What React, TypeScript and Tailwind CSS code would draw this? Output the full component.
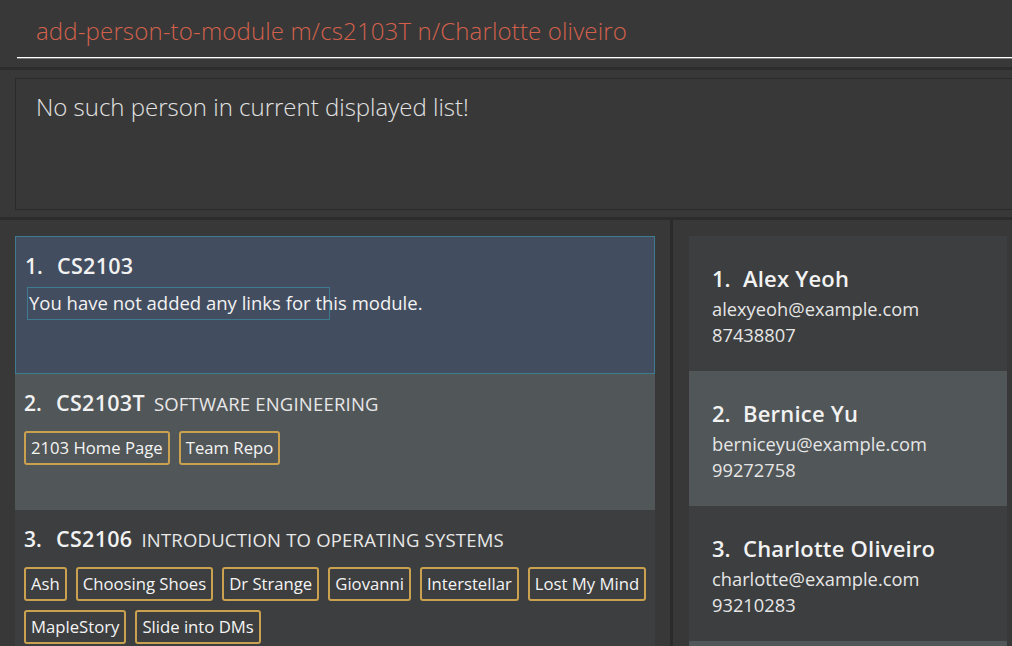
import React from "react";

const F = { fontFamily: '"Open Sans", "Noto Sans", sans-serif' };

function Tag({ label }: { label: string }) {
  return (
    <div className="h-[34px] flex items-center px-[5px] border-2 border-[#c9a14f] rounded-[3px] text-[16.7px] text-[#f4f4f4] leading-none">
      {label}
    </div>
  );
}

function ModuleCard({
  idx,
  code,
  title,
  tags,
  bg,
  selected,
  h,
}: {
  idx: number;
  code: string;
  title?: string;
  tags?: string[];
  bg: string;
  selected?: boolean;
  h?: string;
}) {
  return (
    <div
      className={`${bg} ${h ?? ""} ${selected ? "border border-[#3e7b91]" : ""} pl-[9px] pr-[3px] pt-[13px] shrink-0`}
    >
      <div className="flex items-baseline h-[28px] text-[#f2f2f2]">
        <span className="text-[21px] font-semibold w-[32px]">{idx}.</span>
        <span className="text-[21.5px] font-semibold tracking-[0.3px]">{code}</span>
        {title && (
          <span className="text-[18.5px] ml-[9px] tracking-[0.2px] text-[#e8e8e8]">{title}</span>
        )}
      </div>
      {tags ? (
        <div className="flex flex-wrap gap-[9px] mt-[16px]">
          {tags.map((t) => (
            <Tag key={t} label={t} />
          ))}
        </div>
      ) : (
        <div className="relative mt-[9px] ml-[2px] w-[303px] h-[33px] border border-[#3e7b91]">
          <span className="absolute left-[1px] top-[1px] whitespace-nowrap text-[18.5px] text-[#f2f2f2]">
            You have not added any links for this module.
          </span>
        </div>
      )}
    </div>
  );
}

function PersonCard({
  idx,
  name,
  email,
  phone,
  bg,
}: {
  idx: number;
  name: string;
  email: string;
  phone: string;
  bg: string;
}) {
  return (
    <div className={`${bg} h-[135px] shrink-0 pl-[23px] pt-[26px]`}>
      <div className="flex items-baseline h-[34px] text-[#f2f2f2] text-[22px] font-semibold">
        <span className="w-[31px]">{idx}.</span>
        <span className="tracking-[0.2px]">{name}</span>
      </div>
      <div className="text-[18.3px] leading-[26px] text-[#e6e6e6]">{email}</div>
      <div className="text-[18.3px] leading-[26px] text-[#e6e6e6]">{phone}</div>
    </div>
  );
}

export default function App() {
  return (
    <div className="w-[1012px] h-[646px] bg-[#383838] overflow-hidden flex flex-col" style={F}>
      {/* command box */}
      <div className="h-[67px] shrink-0 pl-[17px] pt-[14px]">
        <div className="h-[44px] border-b border-white pl-[19px]">
          <span className="text-[24px] font-light text-[#d3614c] tracking-[0.15px] leading-[34px]">
            add-person-to-module m/cs2103T n/Charlotte oliveiro
          </span>
        </div>
        <div className="h-px bg-[#7a7a7a]" />
      </div>
      <div className="h-[3px] shrink-0 bg-[#2c2c2c]" />
      {/* result display */}
      <div className="h-[147px] shrink-0 pt-[8px] pl-[15px]">
        <div className="h-[132px] border border-r-0 border-[#2a2a2a] pl-[20px] pt-[12px]">
          <span className="text-[24px] font-light text-[#e2e2e2] leading-[32px]">
            No such person in current displayed list!
          </span>
        </div>
      </div>
      <div className="h-[3px] shrink-0 bg-[#2c2c2c]" />
      {/* lists */}
      <div className="flex flex-1 min-h-0">
        <div className="w-[670px] shrink-0 pl-[15px] pr-[15px] pt-[16px] flex flex-col overflow-hidden">
          <ModuleCard idx={1} code="CS2103" bg="bg-[#424d5f]" selected h="h-[138px]" />
          <ModuleCard
            idx={2}
            code="CS2103T"
            title="SOFTWARE ENGINEERING"
            tags={["2103 Home Page", "Team Repo"]}
            bg="bg-[#515658]"
            h="h-[136px]"
          />
          <ModuleCard
            idx={3}
            code="CS2106"
            title="INTRODUCTION TO OPERATING SYSTEMS"
            tags={[
              "Ash",
              "Choosing Shoes",
              "Dr Strange",
              "Giovanni",
              "Interstellar",
              "Lost My Mind",
              "MapleStory",
              "Slide into DMs",
            ]}
            bg="bg-[#3c3e3f]"
            h="h-[180px]"
          />
        </div>
        <div className="w-[3px] shrink-0 bg-[#2b2b2b]" />
        <div className="flex-1 pl-[16px] pr-[5px] pt-[16px] flex flex-col overflow-hidden">
          <PersonCard idx={1} name="Alex Yeoh" email="alexyeoh@example.com" phone="87438807" bg="bg-[#3c3e3f]" />
          <PersonCard idx={2} name="Bernice Yu" email="berniceyu@example.com" phone="99272758" bg="bg-[#515658]" />
          <PersonCard idx={3} name="Charlotte Oliveiro" email="charlotte@example.com" phone="93210283" bg="bg-[#3c3e3f]" />
          <div className="h-[135px] shrink-0 bg-[#515658]" />
        </div>
      </div>
    </div>
  );
}
